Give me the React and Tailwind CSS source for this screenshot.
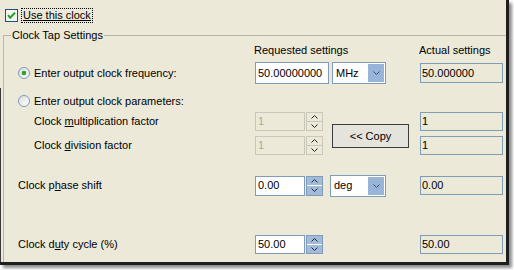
import React from "react";

const Chevron = ({ up = false, color = "#000" }) => (
  <svg width="7" height="4" viewBox="0 0 7 4" className="block">
    {up ? (
      <polyline points="0.5,3.5 3.5,0.5 6.5,3.5" fill="none" stroke={color} strokeWidth="1" />
    ) : (
      <polyline points="0.5,0.5 3.5,3.5 6.5,0.5" fill="none" stroke={color} strokeWidth="1" />
    )}
  </svg>
);

const Radio = ({ checked }) => (
  <svg width="12" height="12" viewBox="0 0 12 12" className="block shrink-0">
    <defs>
      <linearGradient id={checked ? "rg1" : "rg2"} x1="0" y1="0" x2="1" y2="1">
        <stop offset="0" stopColor="#DCDCD6" />
        <stop offset="1" stopColor="#FFFFFF" />
      </linearGradient>
    </defs>
    <circle cx="6" cy="6" r="5.5" fill={`url(#${checked ? "rg1" : "rg2"})`} stroke="#7A98BE" strokeWidth="1" />
    {checked && <circle cx="6" cy="6" r="2.3" fill="#2DA52D" />}
  </svg>
);

const Spin = ({ value, disabled, h }) => {
  const border = disabled ? "border-[#C9C7BA]" : "border-[#7F9DB9]";
  return (
    <div className="flex items-stretch">
      <div
        className={`w-[50px] ${h} border ${border} flex items-center pl-[2px] ${
          disabled ? "bg-[#ECE9D8] text-[#ACA899]" : "bg-white text-black"
        }`}
      >
        {value}
      </div>
      <div className={`ml-[1px] w-[17px] flex flex-col border ${border}`}>
        <div
          className={`flex-1 flex items-center justify-center ${
            disabled ? "bg-[#ECE9D8]" : "bg-[#A3BAD8]"
          }`}
        >
          <Chevron up color={disabled ? "#222" : "#1B2B44"} />
        </div>
        <div className={disabled ? "h-px bg-[#C9C7BA]" : "h-px bg-white"} />
        <div
          className={`flex-1 flex items-center justify-center ${
            disabled ? "bg-[#ECE9D8]" : "bg-[#A3BAD8]"
          }`}
        >
          <Chevron color={disabled ? "#222" : "#1B2B44"} />
        </div>
      </div>
    </div>
  );
};

const Combo = ({ text, w, ml }) => (
  <div className={`${ml} ${w} h-[22px] border border-[#7F9DB9] bg-white flex items-stretch`}>
    <div className="flex-1 flex items-center pl-[3px]">{text}</div>
    <div className="w-[16px] my-[1px] mr-[1px] bg-[#98B4D6] flex items-center justify-center">
      <Chevron color="#3A4E74" />
    </div>
  </div>
);

const Actual = ({ value, h = "h-[19px]", ml = "" }) => (
  <div className={`${ml} w-[83px] ${h} border border-[#7F9DB9] flex items-center pl-[1px] text-black`}>
    {value}
  </div>
);

export default function App() {
  return (
    <div className="w-[514px] h-[270px] bg-white font-['Liberation_Sans',Arial,sans-serif] text-[11px] leading-[13px] text-black">
      <div className="relative w-[509px] h-[265px] bg-[#ECE9D8] border-r-[3px] border-b-[3px] border-[#1E1E1E] shadow-[3px_3px_3px_rgba(0,0,0,0.45)] overflow-hidden">
        <span className="absolute left-0 top-[88px] bottom-0 w-px bg-[#3A3A3A]" />

        {/* Use this clock */}
        <div className="flex items-center h-[16px] mt-[7px] ml-[5px]">
          <svg width="13" height="13" viewBox="0 0 13 13" className="block shrink-0">
            <rect x="0.5" y="0.5" width="12" height="12" fill="#F4F4F0" stroke="#1C5180" />
            <polyline points="3,6.2 5.2,8.7 10,3.6" fill="none" stroke="#21A121" strokeWidth="2" />
          </svg>
          <div className="ml-[3px] h-[15px] px-[1px] border border-dotted border-black flex items-center">
            <span className="underline">Use this clock</span>
          </div>
        </div>

        {/* Group box */}
        <div className="relative ml-[3px] mt-[12px] w-[520px] h-[240px] border-l border-t border-[#B8B6A8]">
          <span className="absolute left-[7px] top-[-7px] px-[1px] bg-[#ECE9D8]">Clock Tap Settings</span>

          {/* headers */}
          <div className="flex items-center h-[14px] mt-[7px]">
            <div className="w-[250px]" />
            <div className="w-[165px]">Requested settings</div>
            <div>Actual settings</div>
          </div>

          {/* row 1 */}
          <div className="flex items-center h-[22px] mt-[5px]">
            <div className="w-[251px] pl-[14px] flex items-center">
              <Radio checked />
              <span className="ml-[4px]">Enter output clock frequency:</span>
            </div>
            <div className="w-[74px] h-[22px] border border-[#7F9DB9] bg-white flex items-center pl-[2px]">
              50.00000000
            </div>
            <Combo text="MHz" w="w-[54px]" ml="ml-[3px]" />
            <Actual value="50.000000" h="h-[20px]" ml="ml-[34px]" />
          </div>

          {/* row 2 */}
          <div className="flex items-center h-[12px] mt-[11px]">
            <div className="w-[251px] pl-[14px] flex items-center">
              <Radio />
              <span className="ml-[4px]">Enter output clock parameters:</span>
            </div>
          </div>

          {/* mult / div */}
          <div className="flex mt-[5px]">
            <div className="flex flex-col">
              <div className="flex items-center h-[19px]">
                <div className="w-[251px] pl-[30px]">
                  Clock <span className="underline">m</span>ultiplication factor
                </div>
                <Spin value="1" disabled h="h-[19px]" />
              </div>
              <div className="flex items-center h-[19px] mt-[5px]">
                <div className="w-[251px] pl-[30px]">
                  Clock <span className="underline">d</span>ivision factor
                </div>
                <Spin value="1" disabled h="h-[19px]" />
              </div>
            </div>
            <div className="ml-[9px] mt-[12px] w-[77px] h-[24px] border border-[#3C3C3C] bg-[#E4E3DC] flex items-center justify-center">
              &lt;&lt; Copy
            </div>
            <div className="ml-[11px] flex flex-col gap-[5px]">
              <Actual value="1" />
              <Actual value="1" />
            </div>
          </div>

          {/* phase */}
          <div className="flex items-center h-[21px] mt-[20px]">
            <div className="w-[251px] pl-[14px]">
              Clock p<span className="underline">h</span>ase shift
            </div>
            <Spin value="0.00" h="h-[20px]" />
            <Combo text="deg" w="w-[56px]" ml="ml-[7px]" />
            <Actual value="0.00" ml="ml-[34px]" />
          </div>

          {/* duty */}
          <div className="flex items-center h-[19px] mt-[39px]">
            <div className="w-[251px] pl-[14px]">
              Clock d<span className="underline">u</span>ty cycle (%)
            </div>
            <Spin value="50.00" h="h-[19px]" />
            <Actual value="50.00" ml="ml-[97px]" />
          </div>
        </div>
      </div>
    </div>
  );
}
